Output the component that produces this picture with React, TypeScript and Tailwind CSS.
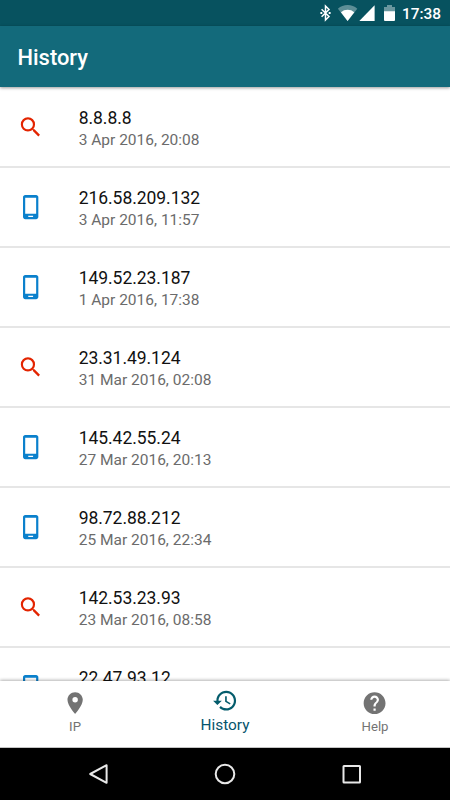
import type { ReactNode } from 'react'
import { MdHelp, MdPlace, MdSearch } from 'react-icons/md'

type Entry = {
  ip: string
  date?: string
  kind: 'lookup' | 'device'
}

const entries: Entry[] = [
  { ip: '8.8.8.8', date: '3 Apr 2016, 20:08', kind: 'lookup' },
  { ip: '216.58.209.132', date: '3 Apr 2016, 11:57', kind: 'device' },
  { ip: '149.52.23.187', date: '1 Apr 2016, 17:38', kind: 'device' },
  { ip: '23.31.49.124', date: '31 Mar 2016, 02:08', kind: 'lookup' },
  { ip: '145.42.55.24', date: '27 Mar 2016, 20:13', kind: 'device' },
  { ip: '98.72.88.212', date: '25 Mar 2016, 22:34', kind: 'device' },
  { ip: '142.53.23.93', date: '23 Mar 2016, 08:58', kind: 'lookup' },
  { ip: '22.47.93.12', kind: 'device' },
]

function PhoneIcon() {
  return (
    <svg viewBox="-.5 0 24 24" className="size-[26.25px] fill-[#0a80cc]">
      <path d="M17 1H7c-1.1 0-2 .9-2 2v18c0 1.1.9 2 2 2h10c1.1 0 2-.9 2-2V3c0-1.1-.9-2-2-2zm-2.8 20.1H9.8v-1.2h4.4v1.2zM17 18.1H7V3.5h10v14.6z" />
    </svg>
  )
}

function HistoryIcon() {
  return (
    <svg viewBox="0 .4 24 24" className="size-[26.25px] fill-[#045c6c]">
      <path d="M13 3c-4.97 0-9 4.03-9 9H1l3.89 3.89.07.14L9 12H6c0-3.87 3.13-7 7-7s7 3.13 7 7-3.13 7-7 7c-1.93 0-3.68-.79-4.94-2.06l-1.42 1.42C8.27 19.99 10.51 21 13 21c4.97 0 9-4.03 9-9s-4.03-9-9-9zm-1 5v5l4.28 2.54.72-1.21-3.5-2.08V8H12z" />
    </svg>
  )
}

function StatusBar() {
  return (
    <div className="flex h-[26px] shrink-0 justify-end bg-[#07525f] text-white">
      <svg viewBox="0 0 82 26" className="h-[26px] w-[82px]">
        <path d="M3.6 9.2l7.4 7.3L7.5 20V6L11 9.5l-7.4 7.3" fill="none" stroke="#fff" strokeWidth="1.5" />
        <path d="M2.4 13h1.9M10.7 13h1.9" stroke="#fff" strokeWidth="1.8" />
        <path d="M19.9 8.7a14.6 14.6 0 0 1 19.4 0L29.6 21z" fill="#fff" opacity=".35" />
        <path d="M22.9 12.2a10.5 10.5 0 0 1 13.4 0L29.6 21z" fill="#fff" />
        <path d="M41.3 21h15.3V5.3z" fill="#fff" />
        <path d="M66 7h3V5h5v2h3v5H66z" fill="#fff" opacity=".4" />
        <path d="M66 11.3h11V20a1 1 0 0 1-1 1h-9a1 1 0 0 1-1-1z" fill="#fff" />
      </svg>
      <span className="mr-[9px] ml-[2px] w-[39px] text-[15.4px] leading-[28px] font-medium whitespace-nowrap">17:38</span>
    </div>
  )
}

function Row({ entry }: { entry: Entry }) {
  return (
    <li className="flex h-20 shrink-0 border-b-2 border-[#e6e6e6] pl-[17px]">
      <div className="w-[61.7px] pt-[26px]">
        {entry.kind === 'lookup' ? (
          <MdSearch viewBox="-.5 0 24 24" className="size-[26.25px] text-[#e32400]" />
        ) : (
          <PhoneIcon />
        )}
      </div>
      <div className="pt-[19px]">
        <div className="text-[17.5px] leading-[22px] tracking-[-0.05px] text-[#111]">{entry.ip}</div>
        {entry.date && <div className="text-[15.5px] leading-[22px] text-[#6b6b6b]">{entry.date}</div>}
      </div>
    </li>
  )
}

function Tab({ icon, label, active = false }: { icon: ReactNode; label: string; active?: boolean }) {
  return (
    <button
      className={
        active
          ? 'flex flex-1 flex-col items-center pt-[7px] text-[15.4px] leading-[23px] text-[#06546c]'
          : 'flex flex-1 flex-col items-center pt-[9px] text-[13.2px] leading-[21px] text-[#737373]'
      }
    >
      {icon}
      <span>{label}</span>
    </button>
  )
}

export default function App() {
  return (
    <div className="flex h-[800px] w-[450px] flex-col overflow-hidden bg-white font-['Roboto',sans-serif]">
      <StatusBar />
      <header className="z-10 flex h-[61px] shrink-0 items-center bg-[#136a7b] pt-[4px] pl-[17.5px] text-[21.9px] font-medium text-white shadow-[0_1px_3px_rgba(0,0,0,0.4)]">
        History
      </header>
      <ul className="flex min-h-0 flex-1 flex-col overflow-hidden pt-px">
        {entries.map(entry => (
          <Row key={entry.ip} entry={entry} />
        ))}
      </ul>
      <nav className="z-10 flex h-[67px] shrink-0 border-b border-[#c4c4c4] bg-white shadow-[0_-1px_3px_rgba(0,0,0,0.3)]">
        <Tab icon={<MdPlace className="size-[26.25px]" />} label="IP" />
        <Tab icon={<HistoryIcon />} label="History" active />
        <Tab icon={<MdHelp viewBox=".5 0 24 24" className="size-[26.25px]" />} label="Help" />
      </nav>
      <div className="flex h-[52px] shrink-0 items-center justify-center gap-[100px] bg-black">
        <svg viewBox="0 0 26 26" className="size-[26px] fill-none stroke-[#e8e8e8] stroke-2">
          <path d="M20.6 4.2v17.6L4.2 13z" strokeLinejoin="round" />
        </svg>
        <svg viewBox="0 0 26 26" className="size-[26px] fill-none stroke-[#e8e8e8] stroke-2">
          <circle cx="13" cy="13" r="9.3" />
        </svg>
        <svg viewBox="0 0 26 26" className="size-[26px] fill-none stroke-[#e8e8e8] stroke-2">
          <rect x="5.5" y="5" width="16.5" height="16.5" rx=".5" />
        </svg>
      </div>
    </div>
  )
}
